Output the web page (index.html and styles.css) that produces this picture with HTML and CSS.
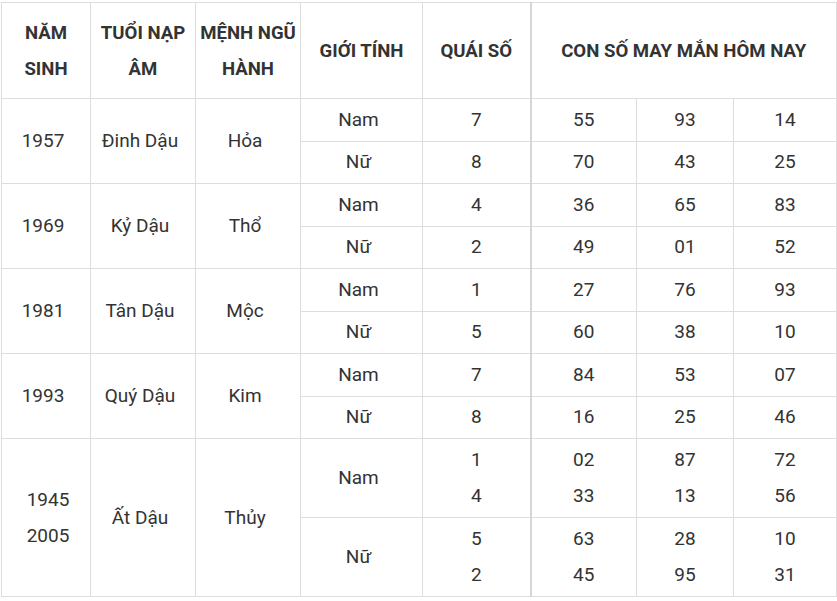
FILE: index.html
```html
<!DOCTYPE html>
<html lang="vi">
<head>
<meta charset="utf-8">
<link rel="stylesheet" href="styles.css">
</head>
<body>
<table class="lucky">
  <colgroup>
    <col class="c1"><col class="c2"><col class="c3"><col class="c4"><col class="c5"><col class="c6"><col class="c7"><col class="c8">
  </colgroup>
  <thead>
    <tr>
      <th>NĂM<br>SINH</th>
      <th>TUỔI NẠP<br>ÂM</th>
      <th>MỆNH NGŨ<br>HÀNH</th>
      <th>GIỚI TÍNH</th>
      <th class="qs">QUÁI SỐ</th>
      <th colspan="3">CON SỐ MAY MẮN HÔM NAY</th>
    </tr>
  </thead>
  <tbody>
    <tr><td rowspan="2" class="sh">1957</td><td rowspan="2" class="sh">Đinh Dậu</td><td rowspan="2" class="sh">Hỏa</td><td class="sh">Nam</td><td class="qs">7</td><td>55</td><td>93</td><td>14</td></tr>
    <tr><td class="sh">Nữ</td><td class="qs">8</td><td>70</td><td>43</td><td>25</td></tr>
    <tr><td rowspan="2" class="sh">1969</td><td rowspan="2" class="sh">Kỷ Dậu</td><td rowspan="2" class="sh">Thổ</td><td class="sh">Nam</td><td class="qs">4</td><td>36</td><td>65</td><td>83</td></tr>
    <tr><td class="sh">Nữ</td><td class="qs">2</td><td>49</td><td>01</td><td>52</td></tr>
    <tr><td rowspan="2" class="sh">1981</td><td rowspan="2" class="sh">Tân Dậu</td><td rowspan="2" class="sh">Mộc</td><td class="sh">Nam</td><td class="qs">1</td><td>27</td><td>76</td><td>93</td></tr>
    <tr><td class="sh">Nữ</td><td class="qs">5</td><td>60</td><td>38</td><td>10</td></tr>
    <tr><td rowspan="2" class="sh">1993</td><td rowspan="2" class="sh">Quý Dậu</td><td rowspan="2" class="sh">Kim</td><td class="sh">Nam</td><td class="qs">7</td><td>84</td><td>53</td><td>07</td></tr>
    <tr><td class="sh">Nữ</td><td class="qs">8</td><td>16</td><td>25</td><td>46</td></tr>
    <tr class="tall"><td rowspan="2" class="yr2">1945<br>2005</td><td rowspan="2" class="sh">Ất Dậu</td><td rowspan="2" class="sh">Thủy</td><td class="sh">Nam</td><td class="qs">1<br>4</td><td>02<br>33</td><td>87<br>13</td><td>72<br>56</td></tr>
    <tr class="tall"><td class="sh">Nữ</td><td class="qs">5<br>2</td><td>63<br>45</td><td>28<br>95</td><td>10<br>31</td></tr>
  </tbody>
</table>
</body>
</html>
```
FILE: styles.css
```css
html, body {
  margin: 0;
  padding: 0;
  background: #ffffff;
}
body {
  padding: 2px 0 0 1px;
}
.lucky {
  border-collapse: collapse;
  table-layout: fixed;
  width: 835px;
  font-family: Roboto, "Liberation Sans", Arial, sans-serif;
  font-size: 19px;
  color: #333333;
}
.c1 { width: 89px; }
.c2 { width: 105px; }
.c3 { width: 105px; }
.c4 { width: 122px; }
.c5 { width: 108px; }
.c6 { width: 106px; }
.c7 { width: 97px; }
.c8 { width: 103px; }
.lucky th, .lucky td {
  border: 1px solid #dddddd;
  text-align: center;
  vertical-align: middle;
  padding: 0 4px;
  line-height: 36px;
}
.lucky th {
  font-weight: 700;
  font-size: 18.6px;
  color: #333333;
  height: 95px;
  padding: 0 2px;
}
.lucky td {
  height: 41.5px;
}
.lucky td.sh {
  padding: 0 7px 0 1px;
}
.lucky td.yr2 {
  padding: 0 1px 0 5px;
}
.lucky tr.tall td {
  height: 78px;
}
.lucky .qs {
  border-right: 2px solid #d6d6d6;
}
```
